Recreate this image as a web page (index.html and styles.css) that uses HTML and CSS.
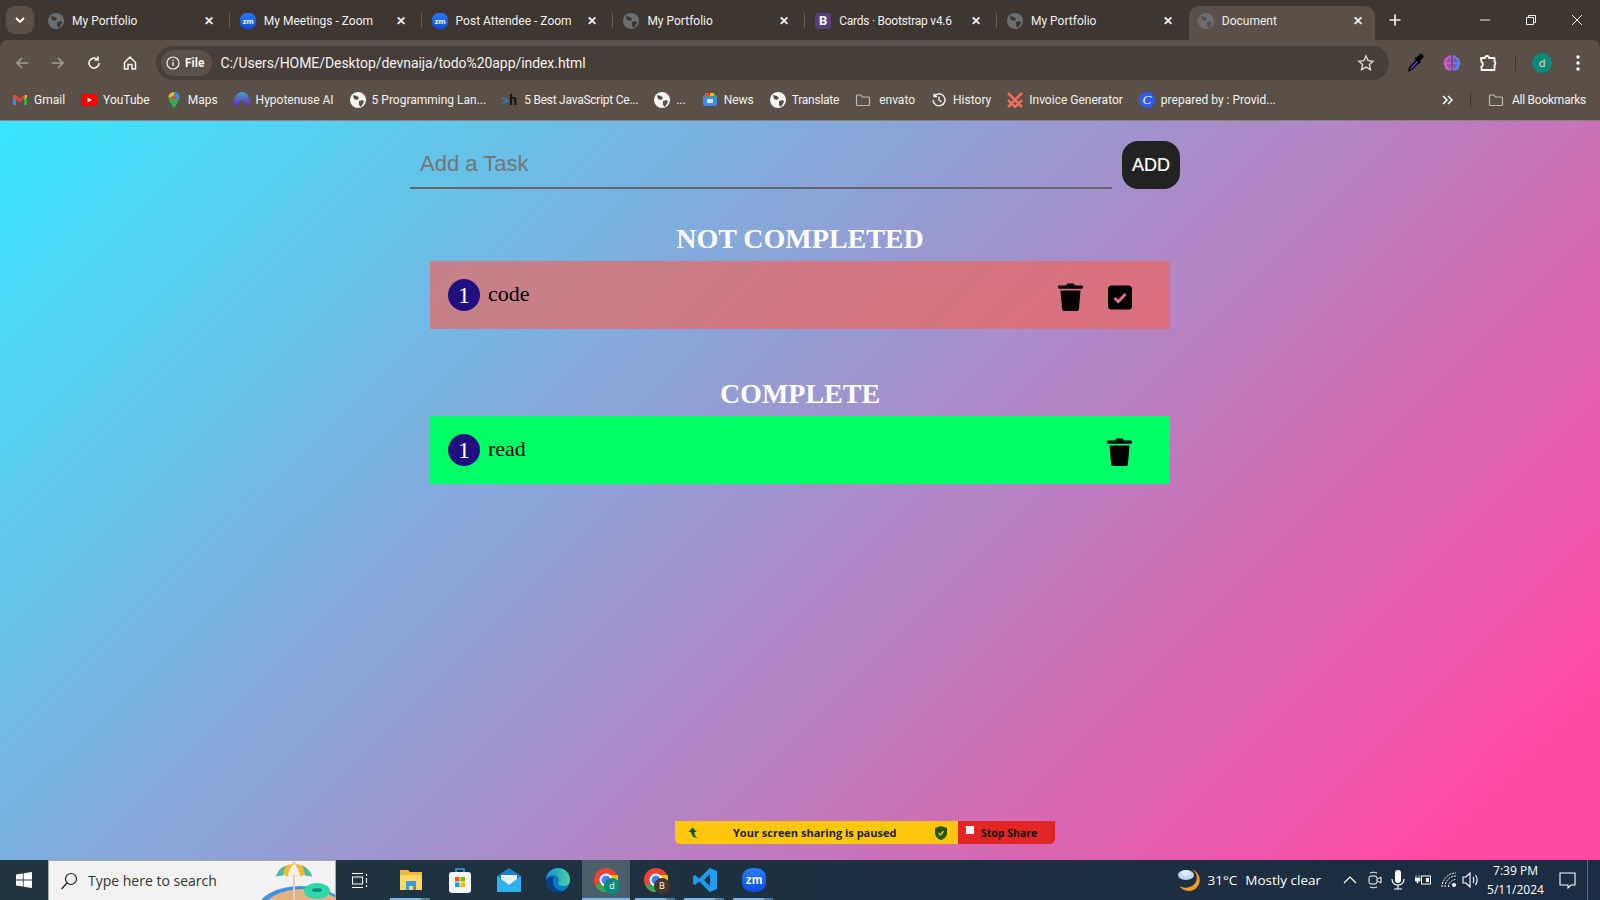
FILE: index.html
```html
<!DOCTYPE html>
<html lang="en">
<head>
<meta charset="UTF-8">
<meta name="viewport" content="width=device-width, initial-scale=1.0">
<title>Document</title>
<link rel="stylesheet" href="styles.css">
</head>
<body>
<svg class="sprites" width="0" height="0">
  <defs>
    <linearGradient id="hypo" x1="0" y1="0" x2="0" y2="1"><stop offset="0" stop-color="#3fa6c8"/><stop offset="1" stop-color="#6a1fc4"/></linearGradient>
    <linearGradient id="brain" x1="0" y1="0" x2="1" y2="0"><stop offset="0" stop-color="#f052c0"/><stop offset="0.5" stop-color="#a45cf0"/><stop offset="1" stop-color="#3f8cf5"/></linearGradient>
    <linearGradient id="zoomblue" x1="0" y1="0" x2="0" y2="1"><stop offset="0" stop-color="#2b7bff"/><stop offset="1" stop-color="#0b4fe0"/></linearGradient>
    <linearGradient id="edgetop" x1="0" y1="0" x2="1" y2="0"><stop offset="0" stop-color="#0f8fd6"/><stop offset="1" stop-color="#4ed39a"/></linearGradient>
  </defs>
  <symbol id="globe" viewBox="0 0 16 16"><circle cx="8" cy="8" r="8" fill="currentColor"/><path d="M3 3l4 1 2 2-2 2-3-1zM9 9l4-1 1 2-3 5-2-2z" fill="var(--land, #3e3631)"/></symbol>
  <symbol id="trash" viewBox="0 0 25 28"><path d="M9.500 0.500h6l1.500 2h6.500a1.500 1.500 0 0 1 0 3.200h-22a1.500 1.500 0 0 1 0-3.200H8zM2.500 7.500h20l-1.600 18.500a2 2 0 0 1-2 2H6.100a2 2 0 0 1-2-2z" fill="#000"/></symbol>
  <symbol id="folder" viewBox="0 0 16 16"><path d="M1.500 4a1 1 0 0 1 1-1h3.500l1.500 2h6a1 1 0 0 1 1 1v6.500a1 1 0 0 1-1 1h-11a1 1 0 0 1-1-1z" fill="none" stroke="currentColor" stroke-width="1.200"/></symbol>
  <symbol id="chrome" viewBox="0 0 24 24"><circle cx="12" cy="12" r="12" fill="#ea4335"/><path d="M12 12L1.600 18a12 12 0 0 0 12 5.900z" fill="#34a853"/><path d="M12 12l1.600 11.900A12 12 0 0 0 23.600 7H12z" fill="#fbbc04"/><circle cx="12" cy="12" r="5.500" fill="#4285f4" stroke="#fff" stroke-width="2"/></symbol>
</svg>

<div class="tabstrip">
  <div class="tab-search"><svg width="10" height="6" viewBox="0 0 10 6"><path d="M1 1l4 4 4-4" fill="none" stroke="#fff" stroke-width="1.800"/></svg></div>
  <div class="tab"><svg class="fav"><use href="#globe"/></svg><span class="tab-title">My Portfolio</span><span class="tab-x">&#10005;</span></div>
  <div class="tab"><svg class="fav" viewBox="0 0 16 16"><rect width="16" height="16" rx="6.500" fill="url(#zoomblue)"/><text x="8" y="10.500" class="zm-text">zm</text></svg><span class="tab-title">My Meetings - Zoom</span><span class="tab-x">&#10005;</span></div>
  <div class="tab"><svg class="fav" viewBox="0 0 16 16"><rect width="16" height="16" rx="6.500" fill="url(#zoomblue)"/><text x="8" y="10.500" class="zm-text">zm</text></svg><span class="tab-title">Post Attendee - Zoom</span><span class="tab-x">&#10005;</span></div>
  <div class="tab"><svg class="fav"><use href="#globe"/></svg><span class="tab-title">My Portfolio</span><span class="tab-x">&#10005;</span></div>
  <div class="tab"><span class="fav fav-b">B</span><span class="tab-title tight">Cards · Bootstrap v4.6</span><span class="tab-x">&#10005;</span></div>
  <div class="tab tab-last"><svg class="fav"><use href="#globe"/></svg><span class="tab-title">My Portfolio</span><span class="tab-x">&#10005;</span></div>
  <div class="tab tab-active"><svg class="fav"><use href="#globe"/></svg><span class="tab-title">Document</span><span class="tab-x">&#10005;</span></div>
  <div class="tab-new"><svg width="12" height="12" viewBox="0 0 12 12"><path d="M6 0.500v11M0.500 6h11" stroke="#f1f1f1" stroke-width="1.700"/></svg></div>
  <div class="win-btns">
    <svg width="12" height="12" viewBox="0 0 12 12"><path d="M1 6h10" stroke="#eee" fill="none"/></svg>
    <svg width="12" height="12" viewBox="0 0 12 12"><path d="M1.500 3.500h7v7h-7zM3.500 3.500v-2h7v7h-2" stroke="#eee" fill="none"/></svg>
    <svg width="12" height="12" viewBox="0 0 12 12"><path d="M1 1l10 10M11 1L1 11" stroke="#eee" fill="none"/></svg>
  </div>
</div>

<div class="toolbar">
  <svg class="nav-ico" viewBox="0 0 16 16"><path d="M14 8H3M8 3L3 8l5 5" fill="none" stroke="#a39c96" stroke-width="1.600"/></svg>
  <svg class="nav-ico" viewBox="0 0 16 16"><path d="M2 8h11M8 3l5 5-5 5" fill="none" stroke="#a39c96" stroke-width="1.600"/></svg>
  <svg class="nav-ico" viewBox="0 0 16 16"><path d="M13 8a5 5 0 1 1-1.500-3.500M12 1.500V5H8.500" fill="none" stroke="#f2f2f2" stroke-width="1.600"/></svg>
  <svg class="nav-ico nav-home" viewBox="0 0 16 16"><path d="M2.500 7.500L8 2l5.500 5.500V14h-3.500V9.500H6V14H2.500z" fill="none" stroke="#f2f2f2" stroke-width="1.500"/></svg>
  <div class="omnibox">
    <div class="file-chip"><svg width="14" height="14" viewBox="0 0 14 14"><circle cx="7" cy="7" r="6" fill="none" stroke="#eee" stroke-width="1.200"/><path d="M7 6v4M7 3.500v1.400" stroke="#eee" stroke-width="1.300"/></svg>File</div>
    <span class="url">C:/Users/HOME/Desktop/devnaija/todo%20app/index.html</span>
    <svg class="star" width="18" height="18" viewBox="0 0 18 18"><path d="M9 2l2.100 4.600 5 .6-3.700 3.400 1 5L9 13.100l-4.400 2.500 1-5L1.900 7.200l5-.6z" fill="none" stroke="#ddd8d4" stroke-width="1.400"/></svg>
  </div>
  <div class="tool-ext">
    <svg width="18" height="20" viewBox="0 0 18 20"><path d="M1 19l1-5 8-8 3 3-8 8z" fill="#000"/><path d="M3 17l.7-2.600 6.300-6.300 1 1-6.300 6.300z" fill="#3f5be0"/><path d="M9 5l3-3a2.500 2.500 0 0 1 4 3l-3 3 1 1-1.500 1.500-5-5L9 4z" fill="#000"/></svg>
    <svg width="18" height="18" viewBox="0 0 18 18"><path d="M8.300 1.500a3 3 0 0 0-3.500 1.500A3.500 3.500 0 0 0 1.500 7 3.500 3.500 0 0 0 2 12a3.500 3.500 0 0 0 3 4 3 3 0 0 0 3.300 .5zM9.700 1.500a3 3 0 0 1 3.500 1.500A3.500 3.500 0 0 1 16.500 7a3.500 3.500 0 0 1-.5 5 3.500 3.500 0 0 1-3 4 3 3 0 0 1-3.300 .5z" fill="url(#brain)"/><path d="M3 7h5M4 11h4M10 7h5M10 11h4M6 4v3M12 4v3M6 11v3M12 11v3" stroke="#5a5047" stroke-width=".8" fill="none"/></svg>
    <svg width="18" height="18" viewBox="0 0 18 18"><path d="M2 4h4a2 2 0 0 1 4 0h5.500v3.800a2 2 0 0 1 0 3.400V16H2.500v-3.500a2.500 2.500 0 0 0 0-4.500z" fill="none" stroke="#fff" stroke-width="1.800" stroke-linejoin="round"/></svg>
    <span class="tool-sep"></span>
    <span class="avatar">d</span>
    <svg class="tool-dots" width="4" height="16" viewBox="0 0 4 16"><circle cx="2" cy="2" r="1.700" fill="#fff"/><circle cx="2" cy="8" r="1.700" fill="#fff"/><circle cx="2" cy="14" r="1.700" fill="#fff"/></svg>
  </div>
</div>

<div class="bookmarks">
  <div class="bm"><svg class="bm-ico" viewBox="0 0 16 16"><path d="M1 3h3v10H1z" fill="#4285f4"/><path d="M12 3h3v10h-3z" fill="#34a853"/><path d="M13 3h2v2l-3 2.200z" fill="#fbbc04"/><path d="M1 3h3l4 4 4-4h1v1.500L8 10.500 1 5z" fill="#ea4335"/></svg>Gmail</div>
  <div class="bm"><svg class="bm-ico" viewBox="0 0 16 16"><rect y="2" width="16" height="12" rx="3" fill="#f00"/><path d="M6.500 5.500L11 8l-4.500 2.500z" fill="#fff"/></svg>YouTube</div>
  <div class="bm"><svg class="bm-ico" viewBox="0 0 16 16"><path d="M8 0a5.500 5.500 0 0 0-5.500 5.500C2.500 9.500 8 16 8 16s5.500-6.500 5.500-10.500A5.500 5.500 0 0 0 8 0z" fill="#34a853"/><path d="M8 0a5.500 5.500 0 0 1 5.500 5.500L8 8z" fill="#4285f4"/><path d="M2.500 5.500A5.500 5.500 0 0 1 8 0v4z" fill="#fbbc04"/><circle cx="8" cy="5.500" r="2" fill="#ea4335"/></svg>Maps</div>
  <div class="bm"><svg class="bm-ico" viewBox="0 0 16 16"><path d="M0 12C0 5 3 0 8 0s8 5 8 12c0 3-3 3-4 1-1-3-2-5-4-5s-3 2-4 5c-1 2-4 2-4-1z" fill="url(#hypo)"/></svg>Hypotenuse AI</div>
  <div class="bm"><svg class="bm-ico"><use href="#globe"/></svg>5 Programming Lan...</div>
  <div class="bm tight"><span class="bm-h"><i>&gt;</i>h</span>5 Best JavaScript Ce...</div>
  <div class="bm"><svg class="bm-ico"><use href="#globe"/></svg>...</div>
  <div class="bm"><svg class="bm-ico" viewBox="0 0 16 16"><rect x="1" y="3" width="14" height="11" rx="2" fill="#4285f4"/><path d="M1 5a2 2 0 0 1 2-2h10a2 2 0 0 1 2 2z" fill="#34a853"/><path d="M3 1h4v3H3z" fill="#ea4335"/><path d="M8 1h4v3H8z" fill="#fbbc04"/><rect x="5" y="7" width="6" height="4" fill="#cfe0fa"/></svg>News</div>
  <div class="bm tight"><svg class="bm-ico"><use href="#globe"/></svg>Translate</div>
  <div class="bm bm-folder"><svg class="bm-ico"><use href="#folder"/></svg>envato</div>
  <div class="bm"><svg class="bm-ico" viewBox="0 0 16 16"><path d="M3 4.500A6 6 0 1 1 2 8M3 1.500v3h3M8 4.500V8l2.500 2" fill="none" stroke="#eee" stroke-width="1.400"/></svg>History</div>
  <div class="bm"><svg class="bm-ico" viewBox="0 0 16 16"><path d="M1 1l7 7 7-7M1 8l7 7 7-7M1 15l7-7 7 7" fill="none" stroke="#f0705a" stroke-width="2.500"/></svg>Invoice Generator</div>
  <div class="bm"><span class="bm-c">C</span>prepared by : Provid...</div>
  <div class="bm-end">
    <svg width="11" height="10" viewBox="0 0 11 10"><path d="M1 1l4 4-4 4M6 1l4 4-4 4" fill="none" stroke="#fff" stroke-width="1.500"/></svg>
    <span class="tool-sep"></span>
    <div class="bm bm-folder tight"><svg class="bm-ico"><use href="#folder"/></svg>All Bookmarks</div>
  </div>
</div>

<main class="page">
  <form class="add-form">
    <input class="task-input" type="text" placeholder="Add a Task">
    <button class="add-btn" type="button">ADD</button>
  </form>

  <h2 class="list-title">NOT COMPLETED</h2>
  <div class="task task-open">
    <span class="task-num">1</span>
    <span class="task-name">code</span>
    <svg class="ico-trash"><use href="#trash"/></svg>
    <svg class="ico-check" viewBox="0 0 24 24"><rect width="24" height="24" rx="3.500" fill="#000"/><path d="M6.500 12.500l3.700 3.700 7.300-7.700" fill="none" stroke="#da7080" stroke-width="3"/></svg>
  </div>

  <h2 class="list-title list-title-2">COMPLETE</h2>
  <div class="task task-done">
    <span class="task-num">1</span>
    <span class="task-name">read</span>
    <svg class="ico-trash"><use href="#trash"/></svg>
  </div>

  <div class="share-bar">
    <div class="share-msg">
      <svg width="13" height="14" viewBox="0 0 14 14"><path d="M6 1L1.500 6H4.500c0 4 2.500 6 7 6.500C9 11 8 9 8 6h2.500z" fill="#14560f"/></svg>
      <span class="share-text">Your screen sharing is paused</span>
      <svg class="share-shield" width="12" height="14" viewBox="0 0 12 14"><path d="M6 0l6 2v5c0 3-2.500 6-6 7-3.500-1-6-4-6-7V2z" fill="#22570f"/><path d="M3.500 7l2 2 3-4" fill="none" stroke="#ffc60e" stroke-width="1.300"/></svg>
    </div>
    <div class="share-stop"><span class="stop-box"></span>Stop Share</div>
  </div>
</main>

<footer class="taskbar">
  <svg class="win-logo" viewBox="0 0 16 16"><path d="M0 2.400L6.800 1.400V7.600H0zM7.600 1.300L16 0V7.600H7.600zM0 8.400H6.800V14.600L0 13.600zM7.600 8.400H16V16L7.600 14.700z" fill="#fff"/></svg>
  <div class="search-box">
    <svg width="18" height="18" viewBox="0 0 18 18"><circle cx="11" cy="7" r="5.500" fill="none" stroke="#222" stroke-width="1.200"/><path d="M7 11l-5.500 6" stroke="#222" stroke-width="1.300"/></svg>
    <span>Type here to search</span>
    <svg class="search-art" width="84" height="40" viewBox="0 0 84 40"><ellipse cx="50" cy="49" rx="44" ry="24" fill="#3f93e6"/><ellipse cx="52" cy="51" rx="41" ry="23" fill="#e4b27f"/><path d="M25 16C27 6 36 3 43 3s16 3 18 13c-4-3-8-3-12 0-4-3-8-3-12 0-4-3-8-3-12 0z" fill="#f4b731"/><path d="M37 16c0-6 3-11 6-13 3 2 6 7 6 13-4-3-8-3-12 0z" fill="#f5f1e0"/><path d="M25 16C27 9 31 6 35 5c-2 3-3 7-3 10-2-.5-5 0-7 1zM61 16c-2-7-6-10-10-11 2 3 3 7 3 10 2-.5 5 0 7 1z" fill="#3fbfae"/><path d="M42 14h2v26h-2z" fill="#d8d0cc"/><circle cx="43" cy="2" r="1.800" fill="#d8d0cc"/><ellipse cx="66" cy="30" rx="13" ry="8" fill="#2fd8a8"/><ellipse cx="66" cy="29" rx="5" ry="2" fill="#13907c"/></svg>
  </div>
  <svg class="task-view" width="16" height="15" viewBox="0 0 16 15"><path d="M0 .5h11M0 14.500h11M0.500 4h10v7H0.500zM14.500 1v2M14.500 5v5M14.500 12v2" fill="none" stroke="#fff" stroke-width="1.100"/></svg>
  <div class="tb-apps">
    <div class="tb-app tb-run"><svg width="24" height="22" viewBox="0 0 24 22"><path d="M1 1h8l2 2h12v18H1z" fill="#f0b93a"/><path d="M1 6h22v15H1z" fill="#ffd767"/><path d="M7 12h10v9h-3v-4h-4v4H7z" fill="#3d9ae0"/></svg></div>
    <div class="tb-app"><svg width="24" height="26" viewBox="0 0 24 26"><path d="M8 7V2h8v5" fill="none" stroke="#2aa3e6" stroke-width="1.600"/><rect x="1" y="5" width="22" height="21" rx="3" fill="#f6f6f6"/><path d="M7 10h4.500v4.500H7z" fill="#f25022"/><path d="M12.500 10H17v4.500h-4.500z" fill="#7fba00"/><path d="M7 15.500h4.500V20H7z" fill="#00a4ef"/><path d="M12.500 15.500H17V20h-4.500z" fill="#ffb900"/></svg></div>
    <div class="tb-app"><svg width="24" height="24" viewBox="0 0 24 24"><path d="M12 0l12 8v16H0V8z" fill="#1b7fc9"/><path d="M0 8l12 9 12-9v16H0z" fill="#2fb0f0"/><path d="M4 7h16v4l-8 6-8-6z" fill="#e6f5fc"/></svg></div>
    <div class="tb-app"><svg width="24" height="24" viewBox="0 0 24 24"><circle cx="12" cy="12" r="12" fill="#0c78c8"/><path d="M0 11C1 4 6 0 12 0c7 0 12 5 12 12 0 4-3 6-7 6-3 0-5-1-5-3 0-1 1-2 1-3 0-3-3-5-6-5-3 0-6 1-7 4z" fill="url(#edgetop)"/><path d="M7 13c0 6 4 10 10 10-7 3-17-1-17-11 2-3 5-4 8-3-1 1-1 2-1 4z" fill="#0a3f8e"/></svg></div>
    <div class="tb-app tb-active"><svg width="24" height="24"><use href="#chrome"/></svg><span class="tb-badge tb-badge-d">d</span></div>
    <div class="tb-app tb-run"><svg width="24" height="24"><use href="#chrome"/></svg><span class="tb-badge tb-badge-b">B</span></div>
    <div class="tb-app tb-run"><svg width="24" height="24" viewBox="0 0 24 24"><path d="M17 0l7 3v18l-7 3L6 13.500 2 17l-2-1.500V8.500L2 7l4 3.500zM17 6l-6 6 6 6z" fill="#1f9cf0"/></svg></div>
    <div class="tb-app tb-run"><svg width="24" height="24" viewBox="0 0 16 16"><rect width="16" height="16" rx="6.500" fill="url(#zoomblue)"/><text x="8" y="10.500" class="zm-text">zm</text></svg></div>
  </div>
  <div class="tray">
    <svg class="tray-moon" width="24" height="24" viewBox="0 0 24 24"><path d="M14 1.500A11 11 0 1 1 1.500 18 10 9 0 0 0 14 1.500z" fill="#f39a1f"/><ellipse cx="8" cy="7" rx="8" ry="5" fill="#bcd5f0"/><ellipse cx="8" cy="5" rx="5" ry="3" fill="#dfeaf8"/></svg>
    <span class="weather"><span class="temp">31°C</span>Mostly clear</span>
    <svg class="tray-ico" width="14" height="8" viewBox="0 0 14 8"><path d="M1 7l6-6 6 6" fill="none" stroke="#fff" stroke-width="1.200"/></svg>
    <svg class="tray-ico tray-cam" width="14" height="18" viewBox="0 0 14 18"><rect x="1" y="5" width="8" height="8" rx="2" fill="none" stroke="#fff"/><path d="M9.500 8l3.500-2v6l-3.500-2M2 2c2-1 5-1 7 0M2 16c2 1 5 1 7 0" fill="none" stroke="#fff"/></svg>
    <svg class="tray-ico" width="14" height="20" viewBox="0 0 14 20"><rect x="4" y="0" width="6" height="13" rx="3" fill="#fff"/><path d="M1 9c0 8 12 8 12 0M7 15v4M3 19h8" fill="none" stroke="#fff" stroke-width="1.200"/></svg>
    <svg class="tray-ico" width="16" height="14" viewBox="0 0 16 14"><rect x="6.500" y="3" width="9" height="8" fill="none" stroke="#fff"/><path d="M0 5h5v3H3v2H2V8H0zM1 2v3M4 2v3" stroke="#fff" fill="#fff" stroke-width=".6"/><path d="M11 5h3v4h-3z" fill="#fff"/></svg>
    <svg class="tray-ico" width="16" height="16" viewBox="0 0 16 16"><path d="M1 15A14 14 0 0 1 15 1M4 15A11 11 0 0 1 15 4M7.500 15a7.500 7.500 0 0 1 7.500-7.500" fill="none" stroke="#fff" stroke-dasharray="2 1"/><circle cx="13" cy="13" r="2" fill="#fff"/></svg>
    <svg class="tray-ico tray-vol" width="18" height="16" viewBox="0 0 18 16"><path d="M1 5h3l4-4v14l-4-4H1zM11 5c1 2 1 4 0 6M13.500 3c2 3 2 7 0 10" fill="none" stroke="#fff" stroke-width="1.100"/></svg>
    <div class="clock"><span>7:39 PM</span><span>5/11/2024</span></div>
    <svg class="tray-note" width="17" height="17" viewBox="0 0 17 17"><path d="M1 1h15v12h-4l-3 3v-3H1z" fill="none" stroke="#fff" stroke-width="1.100"/></svg>
    <span class="desk-line"></span>
  </div>
</footer>
</body>
</html>
```
FILE: styles.css
```css
* {
    box-sizing: border-box;
}
body {
    margin: 0;
    height: 900px;
    overflow: hidden;
    display: flex;
    flex-direction: column;
    background-color: #3e3631;
    font-family: "Open Sans", "Liberation Sans", sans-serif;
}
.sprites {
    position: absolute;
}
.tight {
    letter-spacing: -0.25px;
}
.zm-text {
    font-family: "Liberation Sans", sans-serif;
    font-size: 8px;
    font-weight: bold;
    fill: #fff;
    text-anchor: middle;
}

/* browser tabs */
.tabstrip {
    height: 40px;
    flex: none;
    display: flex;
    align-items: flex-end;
    padding-left: 6px;
    color: #f1f1f1;
    font-size: 12px;
    font-family: "Roboto", sans-serif;
}
.tab-search {
    width: 28px;
    height: 28px;
    margin: 0 4px 6px 0;
    border-radius: 9px;
    background-color: #5a5047;
    display: flex;
    align-items: center;
    justify-content: center;
}
.tab {
    width: 191.8px;
    flex: none;
    height: 34px;
    display: flex;
    align-items: center;
    padding: 0 16px 4px 10px;
    gap: 8px;
    position: relative;
    --land: #3e3631;
}
.tab::after {
    content: "";
    position: absolute;
    right: 0;
    top: 7px;
    width: 1px;
    height: 15px;
    background-color: #65605a;
}
.tab-last::after, .tab-active::after {
    display: none;
}
.tab-active {
    width: 186px;
    padding-left: 9px;
    padding-right: 12px;
    background-color: #5a5047;
    border-radius: 10px 10px 0 0;
    color: #eee;
    --land: #5a5047;
}
.fav {
    width: 16px;
    height: 16px;
    color: #6b6f73;
    flex: none;
}
.fav-b {
    background-color: #563d7c;
    border-radius: 3px;
    font-weight: bold;
    text-align: center;
    color: #fff;
    font-size: 13px;
    line-height: 16px;
}
.tab-title {
    flex: 1;
    white-space: nowrap;
}
.tab-x {
    font-size: 12px;
    font-weight: bold;
}
.tab-new {
    width: 36px;
    height: 34px;
    display: flex;
    justify-content: center;
    padding: 8px 0 0 4px;
}
.win-btns {
    margin-left: auto;
    display: flex;
    gap: 34px;
    padding-right: 17px;
    height: 40px;
    align-items: center;
}

/* address bar */
.toolbar {
    height: 40px;
    flex: none;
    background-color: #5a5047;
    border-radius: 8px 8px 0 0;
    display: flex;
    align-items: center;
    padding: 6px 0 0 14px;
}
.nav-ico {
    width: 16px;
    height: 16px;
    margin-right: 20px;
}
.nav-ico.nav-home {
    margin-right: 18px;
}
.omnibox {
    width: 1233px;
    height: 34px;
    flex: none;
    border-radius: 17px;
    background-color: #463f39;
    display: flex;
    align-items: center;
    padding: 0 14px 0 5px;
    color: #f2f2f2;
    font-size: 14px;
    font-family: "Roboto", sans-serif;
}
.url {
    letter-spacing: -0.06px;
}
.file-chip {
    display: flex;
    align-items: center;
    gap: 5px;
    height: 26px;
    padding: 0 8px 0 5px;
    background-color: #5a5047;
    border-radius: 13px;
    font-size: 12px;
    font-weight: bold;
    margin-right: 8px;
}
.star {
    margin-left: auto;
}
.tool-ext {
    flex: 1;
    display: flex;
    align-items: center;
    gap: 18px;
    padding-left: 18px;
}
.tool-sep {
    width: 1px;
    height: 16px;
    background-color: #3e3631;
}
.avatar {
    width: 20px;
    height: 20px;
    margin-left: -2px;
    border-radius: 50%;
    background-color: #0a8a7a;
    color: #e8e8e8;
    font-size: 11px;
    line-height: 19px;
    text-align: center;
}
.tool-dots {
    margin-left: 6px;
}

/* bookmarks */
.bookmarks {
    height: 41px;
    flex: none;
    background-color: #5a5047;
    border-bottom: 1px solid #8a8580;
    display: flex;
    align-items: center;
    padding: 0 14px 0 12px;
    gap: 16px;
    color: #f1f1f1;
    font-size: 12px;
    font-family: "Roboto", sans-serif;
}
.bm {
    display: flex;
    align-items: center;
    gap: 6px;
    white-space: nowrap;
    --land: #5a5047;
}
.bm-folder {
    gap: 8px;
}
.bm-folder .bm-ico {
    color: #bdb8b3;
}
.bm-ico {
    width: 16px;
    height: 16px;
    color: #f5f5f5;
}
.bm-h {
    width: 16px;
    font-weight: bold;
    color: #111;
    font-size: 14px;
}
.bm-h i {
    color: #2a7fc0;
    font-style: normal;
}
.bm-c {
    width: 16px;
    height: 16px;
    border-radius: 50%;
    background-color: #2d5df0;
    color: #fff;
    font-size: 13px;
    text-align: center;
    line-height: 16px;
    font-family: "Liberation Serif", serif;
    font-style: italic;
}
.bm-end {
    margin-left: auto;
    display: flex;
    align-items: center;
    gap: 17px;
}

/* the todo page */
.page {
    flex: 1;
    position: relative;
    background: linear-gradient(135deg, #38e6ff, #ff48a0 93%);
    display: flex;
    flex-direction: column;
    align-items: center;
    font-family: "Liberation Serif", serif;
}
.add-form {
    width: 770px;
    margin: 20px 10px 0 0;
    display: flex;
    gap: 10px;
}
.task-input {
    flex: 1;
    height: 48px;
    border: none;
    border-bottom: 2px solid #666;
    background: transparent;
    font-family: "Liberation Sans", sans-serif;
    font-size: 22px;
    padding: 0 10px;
    outline: none;
}
.task-input::placeholder {
    color: #757575;
}
.add-btn {
    width: 58px;
    height: 48px;
    background-color: #222;
    color: white;
    border: none;
    border-radius: 16px;
    font-family: "Liberation Sans", sans-serif;
    font-size: 18px;
    -webkit-text-stroke: 0.2px white;
    cursor: pointer;
}
.list-title {
    color: white;
    margin: 34px 0 0;
    font-size: 28px;
    line-height: 31px;
    height: 38px;
    text-align: center;
}
.list-title-2 {
    margin-top: 49px;
}
.task {
    width: 740px;
    height: 68px;
    display: flex;
    align-items: center;
    padding: 0 38px 0 18px;
    font-size: 24px;
}
.task-open {
    background-color: rgba(239, 101, 93, 0.68);
}
.task-done {
    background-color: #00ff67;
}
.task-num {
    width: 32px;
    height: 32px;
    border-radius: 50%;
    background-color: #20107f;
    color: white;
    text-align: center;
    line-height: 32px;
    margin-right: 8px;
}
.task-name {
    flex: 1;
    margin-top: -2px;
    font-size: 22px;
}
.ico-trash {
    width: 25px;
    height: 28px;
    flex: none;
    margin-top: 4px;
}
.ico-check {
    width: 24px;
    height: 25px;
    flex: none;
    margin-left: 25px;
    margin-top: 5px;
}
.share-bar {
    position: absolute;
    left: 675px;
    top: 700px;
    display: flex;
    height: 23px;
    font-family: "Open Sans", "Liberation Sans", sans-serif;
    font-weight: bold;
    font-size: 11px;
}
.share-msg {
    width: 283px;
    background-color: #ffc60e;
    border-radius: 0 0 0 5px;
    display: flex;
    align-items: center;
    padding: 0 11px 0 12px;
    color: #222;
}
.share-text {
    margin-left: 33px;
}
.share-shield {
    margin-left: auto;
}
.share-stop {
    width: 97px;
    background-color: #e22626;
    border-radius: 0 0 5px 0;
    display: flex;
    align-items: center;
    gap: 7px;
    padding: 0 0 0 8px;
    color: #111;
    font-size: 10.5px;
}
.stop-box {
    width: 8px;
    height: 8px;
    background-color: #e8f6f6;
    margin-top: -6px;
}

/* windows taskbar */
.taskbar {
    height: 40px;
    flex: none;
    background: linear-gradient(90deg, #203540, #1c2c42);
    display: flex;
    align-items: center;
    color: white;
    font-family: "Open Sans", sans-serif;
    font-size: 14px;
}
.win-logo {
    width: 16px;
    height: 16px;
    margin: 0 16px;
}
.search-box {
    width: 288px;
    height: 40px;
    background-color: #f2f2f2;
    border: 1px solid #aaa;
    border-bottom: none;
    display: flex;
    align-items: center;
    gap: 10px;
    padding-left: 11px;
    color: #333;
    overflow: hidden;
    position: relative;
}
.search-art {
    position: absolute;
    right: 0;
    top: 0;
}
.task-view {
    margin: 0 18px 0 16px;
}
.tb-apps {
    display: flex;
}
.tb-app {
    width: 49px;
    height: 40px;
    display: flex;
    align-items: center;
    justify-content: center;
    position: relative;
}
.tb-run::after, .tb-active::after {
    content: "";
    position: absolute;
    left: 4px;
    right: 5px;
    bottom: 0;
    height: 2px;
    background: linear-gradient(90deg, #76b9ed 77%, #4d7fa5 77%);
}
.tb-active {
    width: 48px;
    margin-right: 1px;
    background-color: #4b5f6b;
}
.tb-active::after {
    left: 0;
    right: 0;
    background: #76b9ed;
}
.tb-badge {
    position: absolute;
    right: 10px;
    bottom: 6px;
    width: 16px;
    height: 16px;
    border-radius: 50%;
    font-size: 9px;
    text-align: center;
    line-height: 16px;
}
.tb-badge-d {
    background-color: #0a8a7a;
}
.tb-badge-b {
    background-color: #4a342e;
}
.tray {
    margin-left: auto;
    display: flex;
    align-items: center;
    height: 40px;
    padding-right: 12px;
    font-size: 13.5px;
}
.weather {
    margin: 0 22px 0 6px;
}
.temp {
    margin-right: 8px;
}
.tray-ico {
    margin-right: 10px;
}
.tray-ico.tray-cam {
    margin: 0 9px 0 1px;
}
.tray-ico.tray-vol {
    margin-left: -5px;
}
.clock {
    display: flex;
    flex-direction: column;
    align-items: center;
    width: 51px;
    font-size: 12px;
    line-height: 19px;
    margin-right: 18px;
}
.tray-note {
    flex: none;
}
.desk-line {
    width: 1px;
    height: 40px;
    margin-left: 11px;
    background-color: #5c6873;
}
```
